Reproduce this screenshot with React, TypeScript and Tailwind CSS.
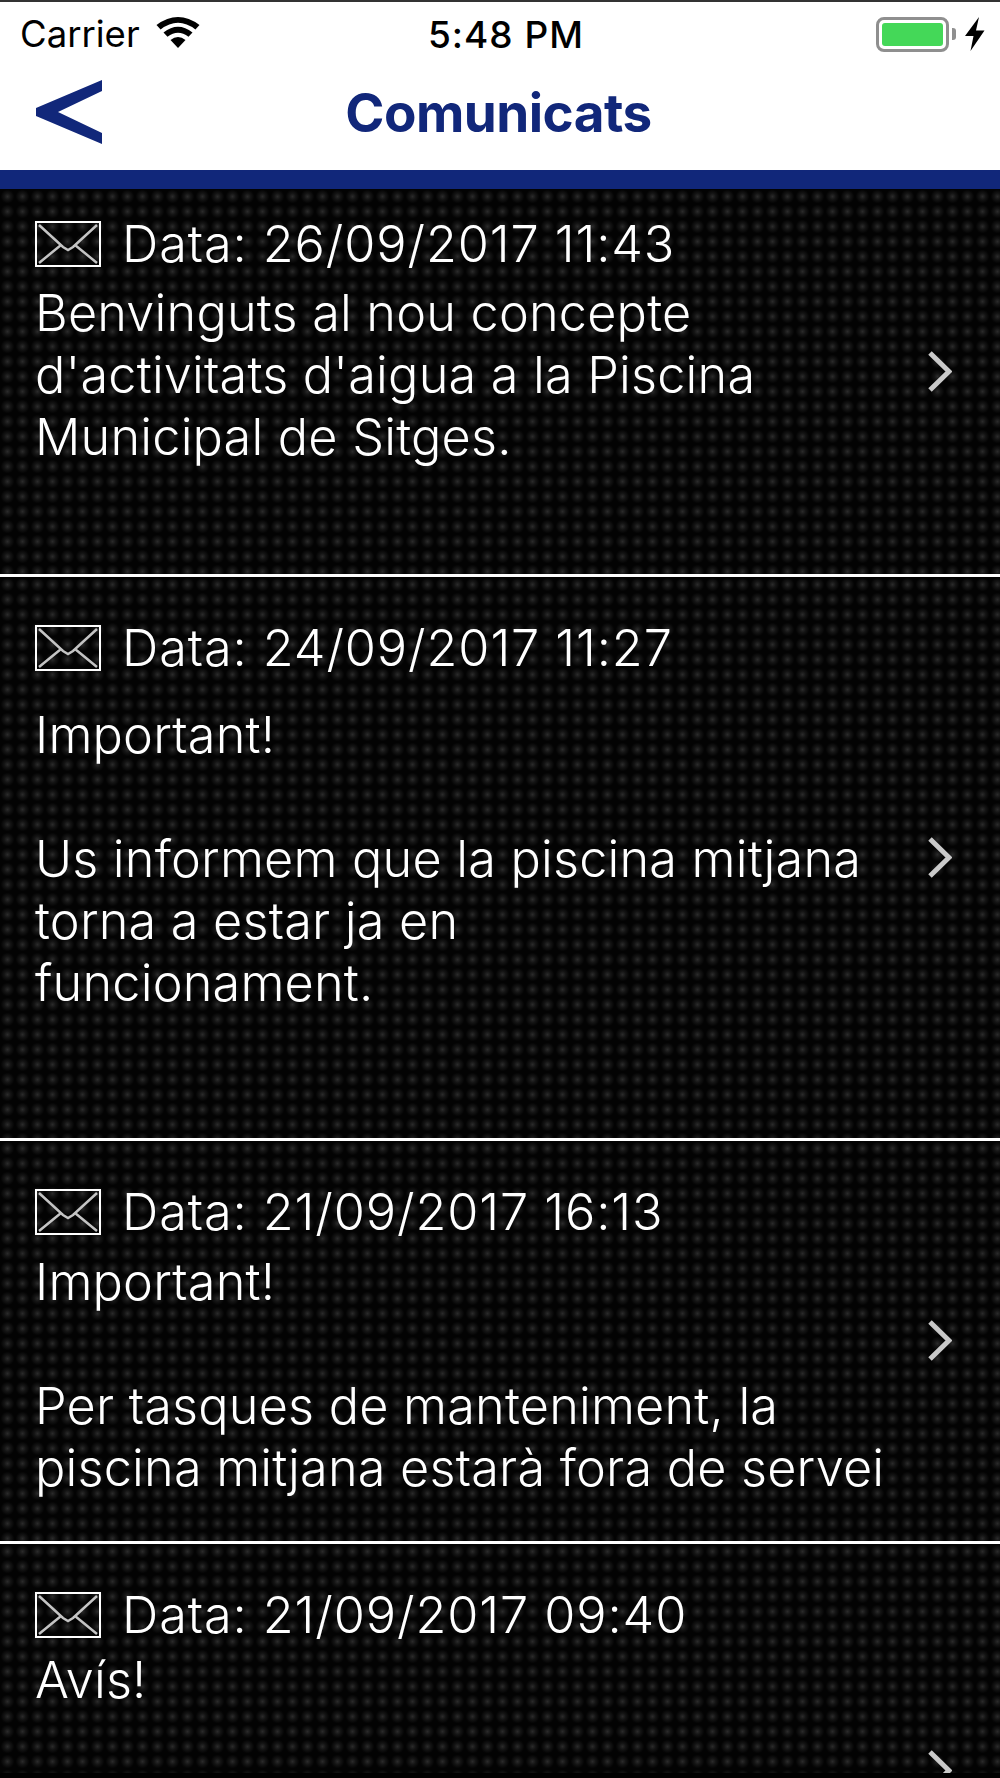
const NAVY = "text-[#11277a]";

type Row = {
  date: string;
  body: string;
  rowClass: string;
  topClass: string;
  bodyClass: string;
  chevronClass: string;
};

const ROWS: Row[] = [
  {
    date: "26/09/2017 11:43",
    body: "Benvinguts al nou concepte\nd'activitats d'aigua a la Piscina\nMunicipal de Sitges.",
    rowClass: "h-[388px]",
    topClass: "pt-[32px]",
    bodyClass: "mt-[15px]",
    chevronClass: "mb-[19px]",
  },
  {
    date: "24/09/2017 11:27",
    body: "Important!\n\nUs informem que la piscina mitjana\ntorna a estar ja en\nfuncionament.",
    rowClass: "h-[564px]",
    topClass: "pt-[48px]",
    bodyClass: "mt-[33px]",
    chevronClass: "",
  },
  {
    date: "21/09/2017 16:13",
    body: "Important!\n\nPer tasques de manteniment, la\npiscina mitjana estarà fora de servei",
    rowClass: "h-[403px]",
    topClass: "pt-[48px]",
    bodyClass: "mt-[16px]",
    chevronClass: "",
  },
  {
    date: "21/09/2017 09:40",
    body: "Avís!",
    rowClass: "h-[456px]",
    topClass: "pt-[48px]",
    bodyClass: "mt-[11px]",
    chevronClass: "",
  },
];

function Wifi() {
  return (
    <svg width="44" height="32" viewBox="0 0 44 32" className="ml-[16px] mt-[-5px]">
      <path d="M22 32 L14.5 24 Q22 18 29.5 24 Z" fill="#000" />
      <path d="M11.5 20.8 L7.5 16.6 Q22 5 36.5 16.6 L32.5 20.8 Q22 12.5 11.5 20.8 Z" fill="#000" />
      <path d="M4.6 13.4 L0.5 9 Q22 -7 43.5 9 L39.4 13.4 Q22 0 4.6 13.4 Z" fill="#000" />
    </svg>
  );
}

function Battery() {
  return (
    <div className="flex items-center">
      <div className="w-[73px] h-[35px] rounded-[8px] border-[3px] border-[#8f8f8f] p-[3px]">
        <div className="w-full h-full rounded-[3px] bg-[#44d858]" />
      </div>
      <div className="ml-[3px] w-[4px] h-[12px] rounded-r-[3px] bg-[#8f8f8f]" />
    </div>
  );
}

function Bolt() {
  return (
    <svg width="20" height="34" viewBox="0 0 20 34" className="ml-[9px]">
      <path d="M14 0 L0 19 L8.5 19 L5.5 34 L19.5 13.5 L11 13.5 Z" fill="#000" />
    </svg>
  );
}

function Back() {
  return (
    <svg width="67" height="64" viewBox="0 0 67 64">
      <path d="M66 0 L0 28 L0 36 L66 64 L66 53 L22 32 L66 11 Z" fill="#11277a" />
    </svg>
  );
}

function Envelope() {
  return (
    <svg width="66" height="46" viewBox="0 0 66 46" className="shrink-0">
      <rect x="1" y="1" width="64" height="44" fill="none" stroke="#fff" strokeWidth="2" />
      <path
        d="M4 4 L28 26 L33 29 L38 26 L62 4 M4 42 L26 24 M62 42 L40 24"
        fill="none"
        stroke="#c4c4c4"
        strokeWidth="2.5"
      />
    </svg>
  );
}

function Chevron({ className }: { className: string }) {
  return (
    <svg width="24" height="42" viewBox="0 0 24 42" className={`shrink-0 ${className}`}>
      <path d="M2 2 L21 20.5 L2 39" fill="none" stroke="#c9c9c9" strokeWidth="5" />
    </svg>
  );
}

function MessageRow({ row }: { row: Row }) {
  return (
    <div
      className={`flex items-center overflow-hidden border-b-[3px] border-white text-white bg-[#040404] bg-[radial-gradient(circle,#2a2a2a_0,#141414_30%,#030303_65%)] bg-size-[15px_15px] ${row.rowClass}`}
    >
      <div className={`flex-1 self-start pl-[35px] ${row.topClass}`}>
        <div className="flex items-center gap-[21px] h-[46px]">
          <Envelope />
          <span className="text-[50.4px] font-[350] leading-[46px] tracking-[0.9px]">Data: {row.date}</span>
        </div>
        <p className={`text-[50.4px] font-[350] leading-[62px] tracking-[0.2px] whitespace-pre-line ${row.bodyClass}`}>
          {row.body}
        </p>
      </div>
      <div className="pr-[48px] flex">
        <Chevron className={row.chevronClass} />
      </div>
    </div>
  );
}

export default function App() {
  return (
    <div className="w-[1000px] h-[1778px] bg-black overflow-hidden font-['Inter','Liberation_Sans',sans-serif]">
      <div className="h-[1773px] overflow-hidden">
        <div className="bg-white border-t-2 border-[#333]">
          {/* Status bar */}
          <div className="grid grid-cols-3 items-center h-[64px] pl-[20px] pr-[15px] text-black">
            <div className="flex items-center">
              <span className="text-[36.5px] leading-none">Carrier</span>
              <Wifi />
            </div>
            <span className="text-center text-[37px] font-medium leading-none tracking-[1px] pl-[7px] whitespace-nowrap">
              5:48 PM
            </span>
            <div className="flex items-center justify-end">
              <Battery />
              <Bolt />
            </div>
          </div>
          {/* Nav */}
          <div className="relative flex items-center justify-center h-[104px]">
            <div className="absolute left-[36px] top-[14px]">
              <Back />
            </div>
            <h1 className={`text-[53px] font-bold leading-none tracking-[-0.5px] mt-[-10px] mr-[3px] ${NAVY}`}>
              Comunicats
            </h1>
          </div>
        </div>
        <div className="h-[19px] bg-[#11277a]" />
        {ROWS.map((row) => (
          <MessageRow key={row.date} row={row} />
        ))}
      </div>
    </div>
  );
}
